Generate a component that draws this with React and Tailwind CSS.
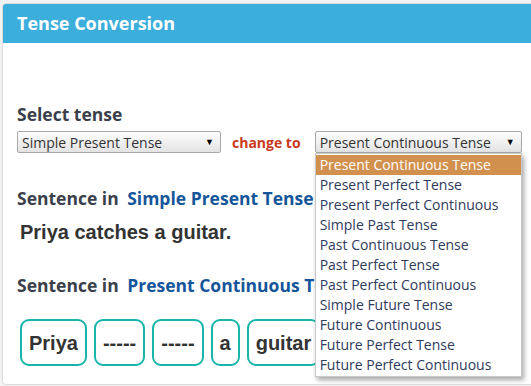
import React from "react";

const tenses = [
  "Present Continuous Tense",
  "Present Perfect Tense",
  "Present Perfect Continuous",
  "Simple Past Tense",
  "Past Continuous Tense",
  "Past Perfect Tense",
  "Past Perfect Continuous",
  "Simple Future Tense",
  "Future Continuous",
  "Future Perfect Tense",
  "Future Perfect Continuous",
];

const words = ["Priya", "-----", "-----", "a", "guitar", "."];

const FakeSelect = ({ value, width }) => (
  <div
    className={`${width} h-[22px] flex items-center justify-between pl-[4px] pr-[6px] border border-[#a9a9a9] rounded-[2px] bg-gradient-to-b from-[#fdfdfd] to-[#e3e3e3] text-[14px] text-[#333] whitespace-nowrap`}
  >
    <span>{value}</span>
    <span className="text-[9px] text-black">▼</span>
  </div>
);

const App = () => {
  return (
    <div className="w-[531px] h-[386px] overflow-hidden bg-[#f2f2f2] pt-[3px] pl-[2px] font-['Open_Sans',sans-serif]">
      <div className="w-[560px] h-[382px] bg-white border border-[#dcdcdc] rounded-[4px] overflow-hidden">
        <div className="h-[39px] bg-[#3caedb] flex items-center pl-[14px]">
          <h2 className="text-[18px] font-bold text-white">Tense Conversion</h2>
        </div>

        <div className="pl-[14px] pt-[59px]">
          <div className="text-[17.5px] font-bold text-[#3a3f4b] leading-[24px]">Select tense</div>

          <div className="flex items-center mt-[5px]">
            <FakeSelect value="Simple Present Tense" width="w-[204px]" />
            <span className="ml-[11px] text-[14px] font-bold text-[#c9391d]">change to</span>
            <div className="relative ml-[14px]">
              <FakeSelect value="Present Continuous Tense" width="w-[207px]" />

              {/* opened dropdown list */}
              <div className="absolute left-0 top-full w-[207px] bg-white border border-[#c8c8c8] shadow-[2px_3px_5px_rgba(0,0,0,0.35)] z-10 py-[1px]">
                {tenses.map((t, i) => (
                  <div
                    key={t}
                    className={`h-[20px] leading-[20px] pl-[4px] text-[14px] whitespace-nowrap ${
                      i === 0 ? "bg-[#d2904e] text-white" : "text-[#2f3a5c]"
                    }`}
                  >
                    {t}
                  </div>
                ))}
              </div>
            </div>
          </div>

          <div className="mt-[33px] text-[17.5px] font-bold leading-[24px] whitespace-nowrap">
            <span className="text-[#3a3f4b]">Sentence in </span>
            <span className="text-[#15569b] ml-[4px]">Simple Present Tense</span>
          </div>
          <div className="mt-[10px] pl-[3px] text-[20px] leading-[24px] font-bold text-[#333] font-['Liberation_Sans',Arial,sans-serif]">
            Priya catches a guitar.
          </div>

          <div className="mt-[29px] text-[17.5px] font-bold leading-[24px] whitespace-nowrap">
            <span className="text-[#3a3f4b]">Sentence in </span>
            <span className="text-[#15569b] ml-[4px]">Present Continuous Tense</span>
          </div>

          <div className="mt-[22px] pl-[3px] flex gap-[7px]">
            {words.map((w, i) => (
              <div
                key={i}
                className="h-[47px] px-[7px] flex items-center border-2 border-[#17b5ab] rounded-[9px] text-[20px] font-bold text-[#333] font-['Liberation_Sans',Arial,sans-serif]"
              >
                {w}
              </div>
            ))}
          </div>
        </div>
      </div>
    </div>
  );
};

export default App;
